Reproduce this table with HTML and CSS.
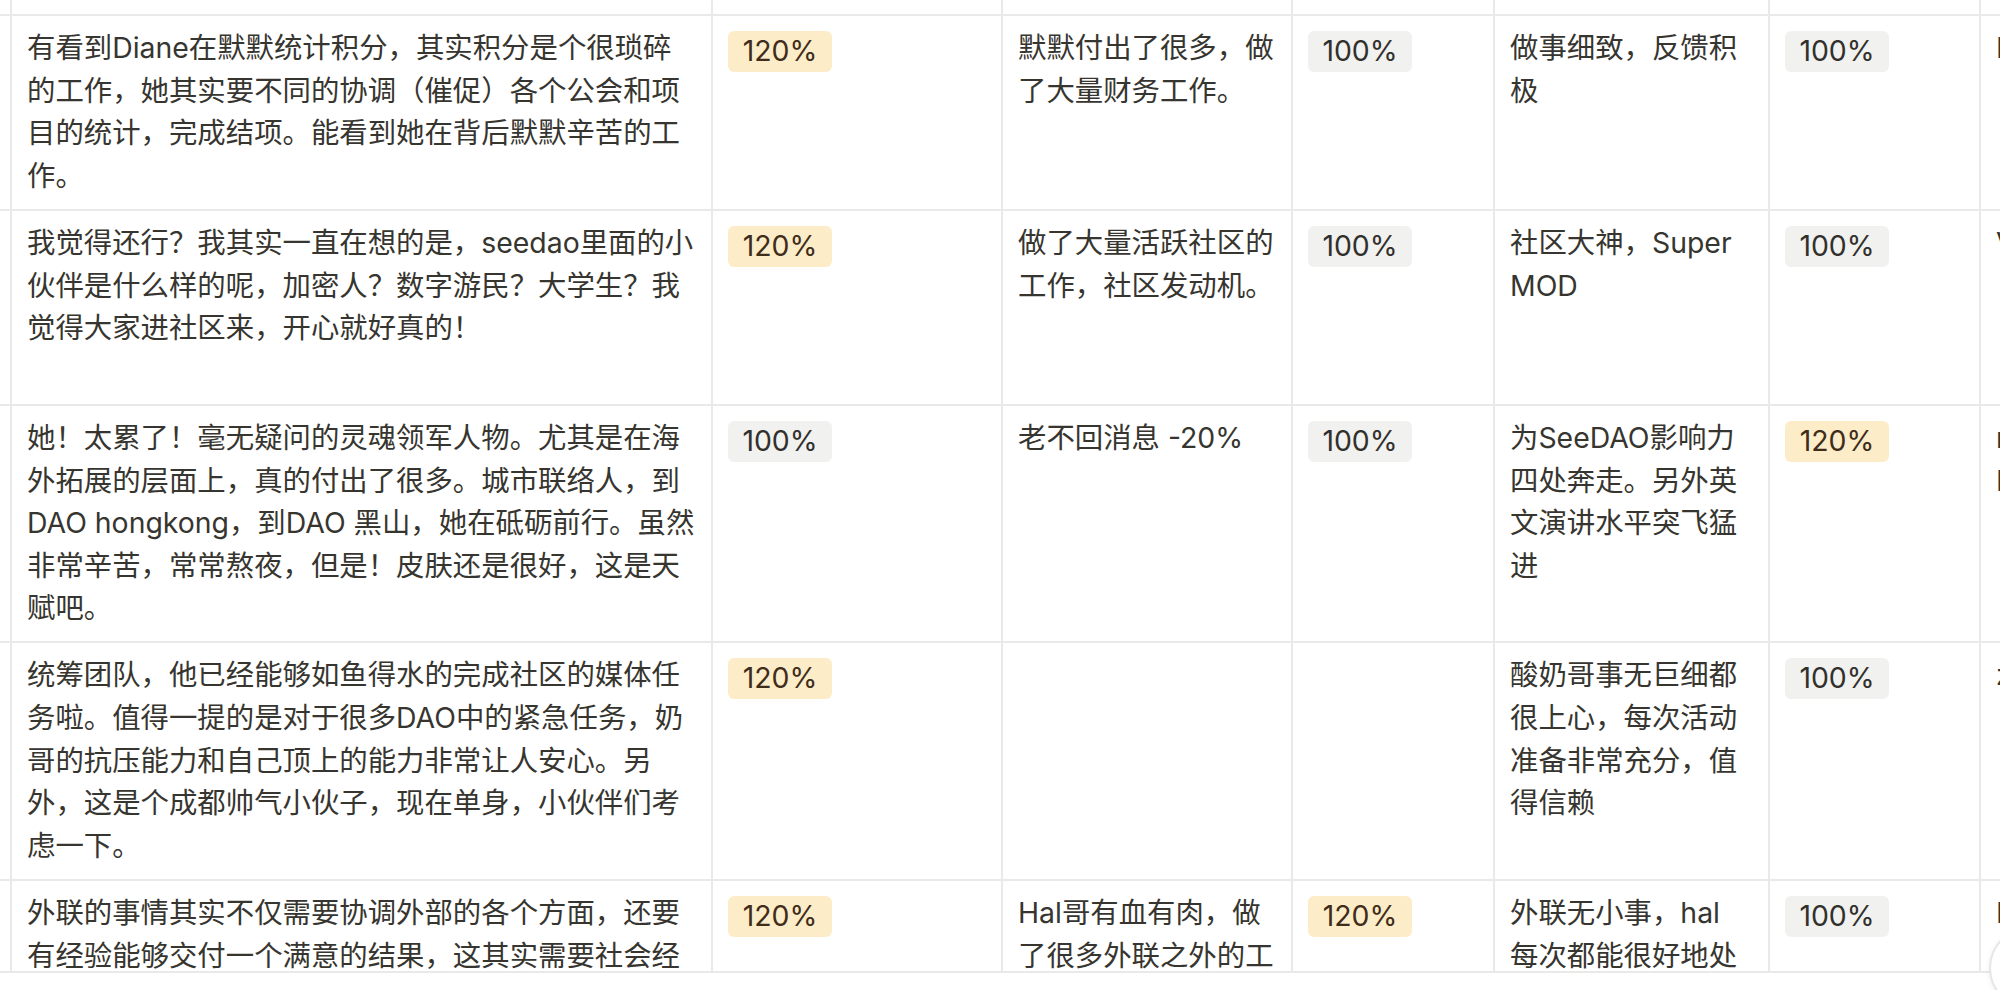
FILE: index.html
```html
<!DOCTYPE html>
<html lang="zh-CN">
<head>
<meta charset="utf-8">
<title>SeeDAO 评价表</title>
<link rel="stylesheet" href="styles.css">
</head>
<body>
<div class="frame">
  <div class="table">
    <div class="row row-top">
      <div class="cell gutter"></div>
      <div class="cell"></div>
      <div class="cell"></div>
      <div class="cell"></div>
      <div class="cell"></div>
      <div class="cell"></div>
      <div class="cell"></div>
      <div class="cell last"></div>
    </div>

    <div class="row">
      <div class="cell gutter"></div>
      <div class="cell text">有看到Diane在默默统计积分，其实积分是个很琐碎<br>的工作，她其实要不同的协调（催促）各个公会和项<br>目的统计，完成结项。能看到她在背后默默辛苦的工<br>作。</div>
      <div class="cell tagcell"><span class="tag yellow">120%</span></div>
      <div class="cell text">默默付出了很多，做<br>了大量财务工作。</div>
      <div class="cell tagcell"><span class="tag gray">100%</span></div>
      <div class="cell text">做事细致，反馈积<br>极</div>
      <div class="cell tagcell"><span class="tag gray">100%</span></div>
      <div class="cell text last">Diane</div>
    </div>

    <div class="row row-tall">
      <div class="cell gutter"></div>
      <div class="cell text">我觉得还行？我其实一直在想的是，seedao里面的小<br>伙伴是什么样的呢，加密人？数字游民？大学生？我<br>觉得大家进社区来，开心就好真的！</div>
      <div class="cell tagcell"><span class="tag yellow">120%</span></div>
      <div class="cell text">做了大量活跃社区的<br>工作，社区发动机。</div>
      <div class="cell tagcell"><span class="tag gray">100%</span></div>
      <div class="cell text">社区大神，Super<br>MOD</div>
      <div class="cell tagcell"><span class="tag gray">100%</span></div>
      <div class="cell text last">Very</div>
    </div>

    <div class="row">
      <div class="cell gutter"></div>
      <div class="cell text">她！太累了！毫无疑问的灵魂领军人物。尤其是在海<br>外拓展的层面上，真的付出了很多。城市联络人，到<br>DAO hongkong，到DAO 黑山，她在砥砺前行。虽然<br>非常辛苦，常常熬夜，但是！皮肤还是很好，这是天<br>赋吧。</div>
      <div class="cell tagcell"><span class="tag gray">100%</span></div>
      <div class="cell text">老不回消息 -20%</div>
      <div class="cell tagcell"><span class="tag gray">100%</span></div>
      <div class="cell text">为SeeDAO影响力<br>四处奔走。另外英<br>文演讲水平突飞猛<br>进</div>
      <div class="cell tagcell"><span class="tag yellow">120%</span></div>
      <div class="cell text last">nice<br>Boss</div>
    </div>

    <div class="row">
      <div class="cell gutter"></div>
      <div class="cell text">统筹团队，他已经能够如鱼得水的完成社区的媒体任<br>务啦。值得一提的是对于很多DAO中的紧急任务，奶<br>哥的抗压能力和自己顶上的能力非常让人安心。另<br>外，这是个成都帅气小伙子，现在单身，小伙伴们考<br>虑一下。</div>
      <div class="cell tagcell"><span class="tag yellow">120%</span></div>
      <div class="cell text"></div>
      <div class="cell tagcell"></div>
      <div class="cell text">酸奶哥事无巨细都<br>很上心，每次活动<br>准备非常充分，值<br>得信赖</div>
      <div class="cell tagcell"><span class="tag gray">100%</span></div>
      <div class="cell text last">z</div>
    </div>

    <div class="row">
      <div class="cell gutter"></div>
      <div class="cell text">外联的事情其实不仅需要协调外部的各个方面，还要<br>有经验能够交付一个满意的结果，这其实需要社会经<br>验和耐心。</div>
      <div class="cell tagcell"><span class="tag yellow">120%</span></div>
      <div class="cell text">Hal哥有血有肉，做<br>了很多外联之外的工<br>作。</div>
      <div class="cell tagcell"><span class="tag yellow">120%</span></div>
      <div class="cell text">外联无小事，hal<br>每次都能很好地处<br>理。</div>
      <div class="cell tagcell"><span class="tag gray">100%</span></div>
      <div class="cell text last">Hal</div>
    </div>
  </div>
</div>
<div class="help-btn" aria-label="帮助"></div>
</body>
</html>
```
FILE: styles.css
```css
html, body {
  margin: 0;
  padding: 0;
  background: #ffffff;
}

body {
  width: 2000px;
  height: 990px;
  overflow: hidden;
  font-family: "Inter", "Noto Sans CJK SC", sans-serif;
  color: #37352f;
  font-size: 28.4px;
  line-height: 1.5;
}

.frame {
  height: 971px;
  overflow: hidden;
  border-bottom: 2px solid #e9e9e7;
}

.table {
  display: flex;
  flex-direction: column;
  width: 2381px;
}

.row {
  display: grid;
  grid-template-columns: 12px 701px 290px 290px 202px 275px 211px 400px;
  border-bottom: 2px solid #e9e9e7;
}

.row-top {
  height: 14px;
}

.row-tall {
  min-height: 193px;
}

.cell {
  box-sizing: border-box;
  border-right: 2px solid #e9e9e7;
  min-width: 0;
}

.cell.last {
  border-right: none;
}

.text {
  padding: 11px 14px 11.5px 15px;
  white-space: nowrap;
}

.tagcell {
  padding: 14px 14px 0 15px;
}

.tag {
  display: inline-flex;
  align-items: center;
  justify-content: center;
  box-sizing: border-box;
  height: 41px;
  min-width: 104px;
  padding: 0 14px;
  border-radius: 6px;
  font-size: 28.4px;
  line-height: 1;
  white-space: nowrap;
}

.tag.yellow {
  background: #fdecc8;
  color: #402c1b;
}

.tag.gray {
  background: #f1f1ef;
  color: #32302c;
}

.help-btn {
  position: absolute;
  left: 1989px;
  top: 927px;
  width: 82px;
  height: 82px;
  box-sizing: border-box;
  border-radius: 50%;
  background: #ffffff;
  border: 2px solid #e6e6e4;
  box-shadow: 0 2px 6px rgba(15, 15, 15, 0.06);
}
```
